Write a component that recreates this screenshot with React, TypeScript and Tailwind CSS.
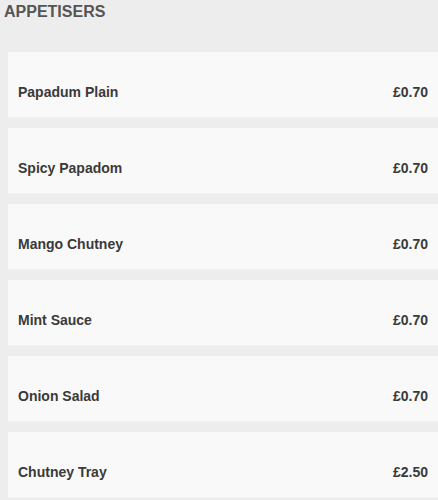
const items = [
  { name: "Papadum Plain", price: "£0.70" },
  { name: "Spicy Papadom", price: "£0.70" },
  { name: "Mango Chutney", price: "£0.70" },
  { name: "Mint Sauce", price: "£0.70" },
  { name: "Onion Salad", price: "£0.70" },
  { name: "Chutney Tray", price: "£2.50" },
];

export default function App() {
  return (
    <div className="min-h-[500px] bg-[#ededed] font-['Liberation_Sans',Arial,sans-serif]">
      <h2 className="pl-[4px] pt-[2px] text-[16px] leading-[20px] font-bold text-[#555]">APPETISERS</h2>
      <div className="mt-[30px] pl-[8px] flex flex-col gap-[10px]">
        {items.map((item) => (
          <div
            key={item.name}
            className="flex items-center justify-between bg-[#f9f9f9] border-b border-[#f2f2f2] pl-[10px] pr-[10px] pt-[30px] pb-[15px] text-[14px] leading-[20px] font-bold text-[#3a3a3a]"
          >
            <span>{item.name}</span>
            <span>{item.price}</span>
          </div>
        ))}
      </div>
    </div>
  );
}
